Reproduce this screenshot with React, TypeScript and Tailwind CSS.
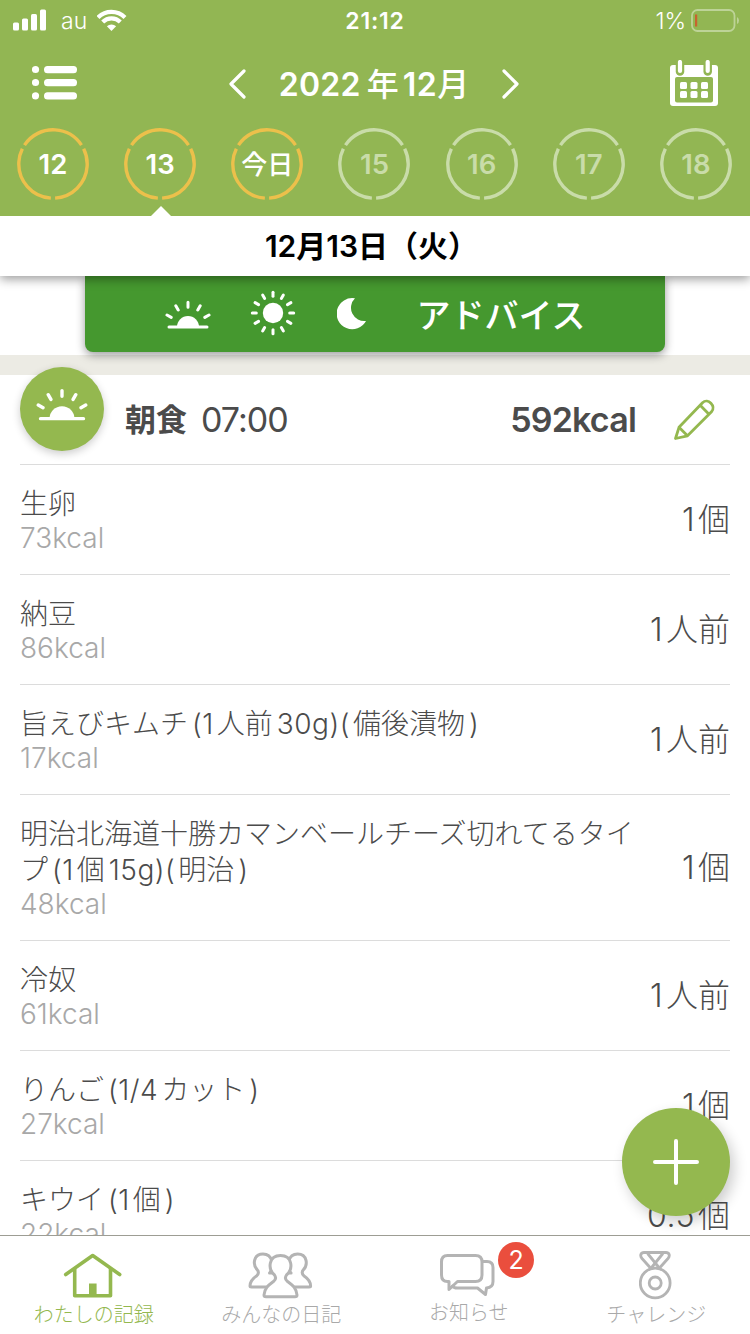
import React from "react";
import clsx from "clsx";

const days = [
  { label: "12", active: true },
  { label: "13", active: true, selected: true },
  { label: "今日", active: true },
  { label: "15" },
  { label: "16" },
  { label: "17" },
  { label: "18" },
];

const foods = [
  { name: "生卵", kcal: "73kcal", amount: "1個" },
  { name: "納豆", kcal: "86kcal", amount: "1人前" },
  { name: "旨えびキムチ(1人前30g)(備後漬物)", kcal: "17kcal", amount: "1人前" },
  {
    name: "明治北海道十勝カマンベールチーズ切れてるタイプ(1個15g)(明治)",
    kcal: "48kcal",
    amount: "1個",
  },
  { name: "冷奴", kcal: "61kcal", amount: "1人前" },
  { name: "りんご(1/4カット)", kcal: "27kcal", amount: "1個" },
  { name: "キウイ(1個)", kcal: "22kcal", amount: "0.5個" },
];

// adds a little air around latin runs inside japanese text
const MixedText = ({ text }: { text: string }) => (
  <>
    {text.split(/([0-9a-z().\/]+)/).map((part, i) =>
      i % 2 ? (
        <span key={i} className="ml-1 mr-[3px] font-[350] tracking-[0.5px]">
          {part}
        </span>
      ) : (
        part
      )
    )}
  </>
);

const SunriseIcon = ({ className }: { className?: string }) => (
  <svg viewBox="-23 -27 46 29" className={className} fill="none" stroke="white" strokeWidth="3" strokeLinecap="round">
    <path d="M-19 0H19" />
    <path d="M-11 0a11 11 0 0 1 22 0z" fill="white" stroke="none" />
    <path d="M0-24.8v5M-12.2-21.2l2.4 4.2M12.2-21.2l-2.4 4.2M-21-12l4.2 2.4M21-12l-4.2 2.4" />
  </svg>
);

const SunIcon = () => (
  <svg viewBox="-23 -23 46 46" className="size-[46px]">
    <circle r="10.2" fill="white" />
    {Array.from({ length: 12 }, (_, i) => (
      <path key={i} d="M0-20.7v4" stroke="white" strokeWidth="3" strokeLinecap="round" transform={`rotate(${i * 30})`} />
    ))}
  </svg>
);

const StatusBar = () => (
  <div className="h-10 grid grid-cols-3 items-center text-white">
    <div className="flex items-center pl-[13px]">
      <svg viewBox="0 0 34 22" className="w-[34px] h-[22px]" fill="white">
        <rect x="0" y="13.5" width="6" height="8" rx="1.5" />
        <rect x="9" y="9.5" width="6" height="12" rx="1.5" />
        <rect x="18" y="5" width="6" height="16.5" rx="1.5" />
        <rect x="27" y="0.5" width="6" height="21" rx="1.5" />
      </svg>
      <span className="ml-3.5 pt-0.5 text-[23px] leading-none font-light">au</span>
      <svg viewBox="97 9 30 22" className="ml-2.5 w-[30px] h-[22px]" fill="none" stroke="white" strokeWidth="4.2">
        <path d="M98 17.4a19.2 19.2 0 0 1 27 0" />
        <path d="M102.7 22a12.5 12.5 0 0 1 17.6 0" />
        <path d="M111.5 31l-4.6-4.7a6.5 6.5 0 0 1 9.2 0z" fill="white" stroke="none" />
      </svg>
    </div>
    <p className="text-center pt-0.5 text-[23px] leading-none font-semibold tracking-[0.8px]">21:12</p>
    <div className="flex items-center justify-end pr-[11px] gap-[5px]">
      <span className="pt-0.5 text-[23px] leading-none font-light">1%</span>
      <svg viewBox="0 0 48 23" className="w-12 h-[23px]">
        <rect x="1" y="1" width="42.5" height="21" rx="5.5" fill="none" stroke="white" strokeOpacity="0.4" strokeWidth="1.8" />
        <path d="M46 8q2 1 2 3.5t-2 3.5z" fill="white" fillOpacity="0.4" />
        <rect x="4" y="5.5" width="2.2" height="12" fill="#c8632f" />
      </svg>
    </div>
  </div>
);

const MonthBar = () => (
  <div className="h-[88px] flex items-center justify-between px-8">
    <svg viewBox="32 65 46 36" className="-mt-0.5 w-[46px] h-9" fill="white">
      {[66, 79, 92.3].map((y) => (
        <g key={y}>
          <circle cx="35.5" cy={y + 3.5} r="3.6" />
          <rect x="44" y={y} width="33" height="7.2" rx="3.5" />
        </g>
      ))}
    </svg>
    <div className="flex items-center">
      <svg viewBox="0 0 18 30" className="w-[18px] h-[30px]" fill="none" stroke="white" strokeWidth="3.2" strokeLinecap="round" strokeLinejoin="round">
        <path d="M16 2L3 15l13 13" />
      </svg>
      <h1 className="w-[256px] pt-px text-center text-[32px] leading-none font-semibold text-white whitespace-nowrap">
        <span className="tracking-[0.3px]">2022</span>
        <span className="ml-1.5 mr-1 font-medium">年</span>
        <span className="tracking-[0.5px]">12</span>
        <span className="font-medium">月</span>
      </h1>
      <svg viewBox="0 0 18 30" className="w-[18px] h-[30px]" fill="none" stroke="white" strokeWidth="3.2" strokeLinecap="round" strokeLinejoin="round">
        <path d="M2 2l13 13L2 28" />
      </svg>
    </div>
    <svg viewBox="670 60 48 46" className="-mt-0.5 w-12 h-[46px]">
      <rect x="670" y="65" width="48" height="41" rx="3" fill="white" />
      <rect x="675" y="77" width="38" height="25.5" rx="2" fill="#92b653" />
      {[680, 707.7].map((x) => (
        <g key={x} strokeLinecap="round">
          <path d={`M${x} 60v11.5`} stroke="#92b653" strokeWidth="8.5" />
          <path d={`M${x} 62v9`} stroke="white" strokeWidth="4.2" />
        </g>
      ))}
      {[680, 690.5, 701].map((x) => (
        <g key={x} fill="white">
          <rect x={x} y="82" width="7" height="7" rx="1.5" />
          <rect x={x} y="91" width="7" height="7" rx="1.5" />
        </g>
      ))}
    </svg>
  </div>
);

const DayCircle = ({ label, active, selected }: { label: string; active?: boolean; selected?: boolean }) => (
  <div className="relative size-[72px] shrink-0 flex items-center justify-center">
    <svg
      viewBox="-36 -36 72 72"
      className={clsx("absolute inset-0", active ? "text-[#ecc04b]" : "text-[#c9dca9]")}
    >
      <circle
        r="34.2"
        fill="none"
        stroke="currentColor"
        strokeWidth="3.4"
        pathLength="360"
        strokeDasharray="112.8 7.2"
        transform="rotate(93.6)"
      />
    </svg>
    <span
      className={clsx(
        "leading-none",
        label === "今日" ? "pt-0.5 text-[26px] font-medium" : "pt-px text-[27.5px] font-semibold",
        active ? "text-white" : "text-[#c9dca9]"
      )}
    >
      {label}
    </span>
    {selected && (
      <svg viewBox="0 0 22 11" className="absolute top-[78px] left-[26px] w-[22px] h-[11px]">
        <path d="M0 11L11 0l11 11z" fill="white" />
      </svg>
    )}
  </div>
);

const AdviceButton = () => (
  <button className="w-[580px] h-[76px] mx-auto rounded-b-lg bg-[#45982f] shadow-[0_3px_10px_rgba(0,0,0,0.4)] flex items-center pl-[79.5px] text-white">
    <SunriseIcon className="w-[46px] h-[29px]" />
    <span className="ml-[39px] -mt-0.5">
      <SunIcon />
    </span>
    <svg viewBox="0 0 30 32" className="ml-[41px] w-[30px] h-8">
      <path d="M18 .3A15.6 15.6 0 1 0 29 23A13.3 13.3 0 0 1 18 .3z" fill="white" />
    </svg>
    <span className="ml-[50px] pt-[3px] text-[34px] leading-none font-medium">アドバイス</span>
  </button>
);

const MealHeader = () => (
  <div className="h-[90px] flex items-center border-b border-[#dcdcdc]">
    <div className="relative -top-[11px] size-[84px] rounded-full bg-[#94b84f] shadow-[0_3px_8px_rgba(0,0,0,0.2)] flex justify-center">
      <SunriseIcon className="w-[52px] h-[33px] mt-[21px]" />
    </div>
    <p className="ml-[21px] text-[31px] leading-none font-bold">朝食</p>
    <p className="ml-3.5 text-[34px] leading-none tracking-[-1px]">07:00</p>
    <p className="ml-auto text-[34px] leading-none font-semibold tracking-[-0.8px]">592kcal</p>
    <svg viewBox="673 397 42 43" className="ml-[37px] mr-[15px] w-[42px] h-[43px]" fill="none" stroke="#94b84f" strokeWidth="2.8" strokeLinejoin="round">
      <path d="M675.5 437.5L679 426.3L702.5 401.8C708 396.5 716.5 405 711.5 410.8L687.5 434.8Z" />
      <path d="M679 426.3l8.5 8.5M700.2 404.2l8.8 9" />
    </svg>
  </div>
);

const FoodRow = ({ food }: { food: (typeof foods)[number] }) => (
  <li className="flex items-center justify-between border-b border-[#dcdcdc] pt-[21px] pb-5">
    <div className="w-[630px]">
      <p className="text-[28px] leading-9">
        <MixedText text={food.name} />
      </p>
      <p className="text-[28px] leading-8 text-[#a8a8a8]">{food.kcal}</p>
    </div>
    <p className="text-[32px] leading-none whitespace-nowrap">
      <MixedText text={food.amount} />
    </p>
  </li>
);

const HomeIcon = () => (
  <svg viewBox="63 1250 62 50" className="w-[62px] h-[50px]" fill="none" stroke="#94b84f" strokeWidth="3.6" strokeLinecap="round" strokeLinejoin="round">
    <path d="M65.7 1274.5l27-19 27 19" />
    <path d="M74.7 1269v26.7h35.8V1269" />
    <path d="M89 1283.5h7.6v12H89z" fill="#94b84f" stroke="none" />
  </svg>
);

const PeopleIcon = () => (
  <svg viewBox="248 1250 67 50" className="w-[67px] h-[50px]" fill="white" stroke="#b4b4b4" strokeWidth="3" strokeLinejoin="round">
    <path d="M257.8 1270.5c1.5 3 0 4.5-1.3 5.5-3 2-6.5 5-6.5 10q0 1 1.5 1h27v-14h-9c6-6 3-19-6.5-19s-11 11-5.2 16.5z" />
    <path d="M302.8 1270.5c-1.5 3 0 4.5 1.3 5.5 3 2 6.5 5 6.5 10q0 1-1.5 1h-27v-14h9c-6-6-3-19 6.5-19s11 11 5.2 16.5z" />
    <path d="M274.5 1275c2 3 1 5-1 6.5-4 3-9 6-9.5 13.5q0 1.8 2 1.8h29q2 0 2-1.8c-.5-7.5-5.5-10.5-9.5-13.5-2-1.5-3-3.5-1-6.5 7-6 6-19.5-6-19.5s-13 13.5-6 19.5z" />
  </svg>
);

const ChatIcon = () => (
  <svg viewBox="440 1250 58 50" className="w-[58px] h-[50px]" fill="none" stroke="#b4b4b4" strokeWidth="3" strokeLinejoin="round" strokeLinecap="round">
    <path d="M483 1261.5h4q6 0 6 6v14q0 6-6.5 6.5l-1 6.5-8-6.5h-20q-4 0-5-2" />
    <path d="M457.5 1281.5h18q6.5 0 6.5-6.5v-13q0-6.5-6.5-6.5h-28q-6 0-6 6.5v13q0 6.5 6 6.5h1.5v8z" />
  </svg>
);

const MedalIcon = () => (
  <svg viewBox="639 1250 34 50" className="w-[34px] h-[50px]" fill="none" stroke="#b4b4b4" strokeWidth="2.8" strokeLinejoin="round" strokeLinecap="round">
    <path d="M650.5 1268l-8.5-9.5c-2.5-3-1-6 2-6h22c3 0 4.5 3 2 6l-8.5 9.5" />
    <path d="M648 1254l10.5 13M662.5 1254l-10.5 13" />
    <circle cx="655.2" cy="1283" r="14.9" />
    <circle cx="655.2" cy="1283" r="6" />
  </svg>
);

const tabs = [
  { label: "わたしの記録", icon: <HomeIcon />, active: true },
  { label: "みんなの日記", icon: <PeopleIcon /> },
  { label: "お知らせ", icon: <ChatIcon />, badge: 2 },
  { label: "チャレンジ", icon: <MedalIcon /> },
];

const TabBar = () => (
  <nav className="h-[99px] shrink-0 grid grid-cols-4 border-t border-[#9d9d94] bg-white">
    {tabs.map((tab) => (
      <div
        key={tab.label}
        className={clsx(
          "relative flex flex-col items-center pt-3.5",
          tab.active ? "text-[#94b84f] font-light" : "text-[#a9a9a9] font-light"
        )}
      >
        {tab.icon}
        <p className={clsx("text-[20px] leading-5", tab.badge ? "mt-[3px]" : "mt-[5px]")}>{tab.label}</p>
        {tab.badge && (
          <span className="absolute top-1.5 left-[123px] size-9 rounded-full bg-[#ea4e3d] text-white text-[25px] leading-9 text-center font-normal">
            {tab.badge}
          </span>
        )}
      </div>
    ))}
  </nav>
);

const App = () => {
  return (
    <div className="relative w-[750px] h-[1334px] overflow-hidden flex flex-col bg-white text-[#4b4b4b] font-['Inter','Noto_Sans_CJK_JP',sans-serif]">
      <header className="h-[216px] shrink-0 bg-[#92b653]">
        <StatusBar />
        <MonthBar />
        <div className="flex justify-between pl-[17px] pr-[18px]">
          {days.map((day) => (
            <DayCircle key={day.label} {...day} />
          ))}
        </div>
      </header>
      <h2 className="relative z-10 h-[60px] shrink-0 bg-white shadow-[0_3px_10px_rgba(0,0,0,0.4)] pr-[7px] text-center text-[30px] leading-[60px] font-semibold text-black [clip-path:inset(0_0_-20px_0)]">
        12月13日（火）
      </h2>
      <main className="flex-1 min-h-0 overflow-hidden">
        <div className="h-[79px] flex items-start">
          <AdviceButton />
        </div>
        <div className="h-5 bg-[#ecebe4]" />
        <section className="px-5">
          <MealHeader />
          <ul className="font-light">
            {foods.map((food) => (
              <FoodRow key={food.name} food={food} />
            ))}
          </ul>
        </section>
      </main>
      <button className="absolute right-5 top-[1108px] size-[108px] rounded-full bg-[#94b84f] shadow-[4px_6px_14px_rgba(0,0,0,0.2)] flex items-center justify-center">
        <svg viewBox="0 0 46 46" className="size-[46px]" stroke="white" strokeWidth="4" strokeLinecap="round">
          <path d="M2 23h42M23 2v42" />
        </svg>
      </button>
      <TabBar />
    </div>
  );
};

export default App;
